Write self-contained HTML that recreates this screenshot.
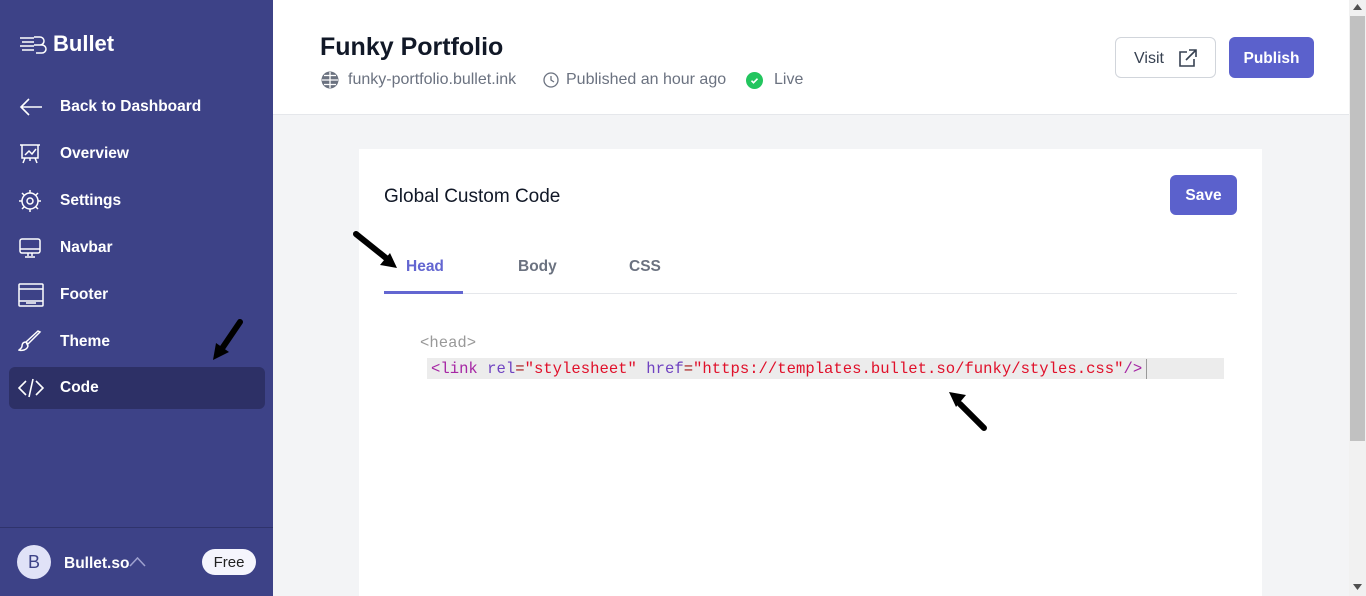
<!DOCTYPE html>
<html style="overflow:hidden;height:596px"><head><meta charset="utf-8"><style>
*{margin:0;padding:0;box-sizing:border-box}
body{width:1366px;height:596px;overflow:hidden;font-family:"Liberation Sans",sans-serif;background:#f3f4f6;position:relative}
.sb{position:absolute;left:0;top:0;width:273px;height:596px;background:#3d4287;color:#fff}
.logo{position:absolute;left:18px;top:31px;font-size:22px;font-weight:bold;display:flex;align-items:center}
.item{position:absolute;left:9px;width:256px;height:42px;display:flex;align-items:center;font-size:15.5px;font-weight:bold;border-radius:6px}
.item svg{position:absolute;left:9px}
.item span{position:absolute;left:51px;top:12px}
.act{background:#2d3066}
.foot{position:absolute;left:0;top:527px;width:273px;border-top:1px solid #2f336c;height:69px}
.av{position:absolute;left:17px;top:545px;width:34px;height:34px;border-radius:50%;background:#e0e2f7;color:#3d4287;font-size:18px;display:flex;align-items:center;justify-content:center}
.free{position:absolute;left:202px;top:549px;width:54px;height:26px;border-radius:13px;background:#f5f5fd;color:#222;font-size:15px;display:flex;align-items:center;justify-content:center}
.hdr{position:absolute;left:273px;top:0;width:1076px;height:115px;background:#fff;border-bottom:1px solid #e5e7eb}
.title{position:absolute;left:320px;top:33px;font-size:25px;font-weight:bold;color:#111827}
.meta{position:absolute;top:71px;font-size:16px;color:#6b7280;display:flex;align-items:center;gap:8px}
.btn{position:absolute;border-radius:6px;display:flex;align-items:center;justify-content:center;font-size:15.5px;font-weight:bold;padding-top:2px}
.card{position:absolute;left:359px;top:149px;width:903px;height:447px;background:#fff}
.tab{position:absolute;top:258px;font-size:15.5px;font-weight:bold;color:#6b7280}
.code{position:absolute;font-family:"Liberation Mono",monospace;font-size:15.6px}
.scroll{position:absolute;left:1349px;top:0;width:17px;height:596px;background:#f1f1f1}
</style></head><body>
<div class="sb">
 <div class="logo"><svg width="34" height="20" viewBox="0 0 34 20" fill="none" stroke="#fff" stroke-width="1.5"><path d="M2 4h14M4 8h12M2 12h14M4 16h12M16 3h6a4 4 0 0 1 0 8h-6M18 11h6a4 4 0 0 1 0 8h-6"/></svg><span style="margin-left:1px">Bullet</span></div>
 <div class="item" style="top:86px"><svg width="26" height="22" viewBox="0 0 26 22" fill="none" stroke="#fff" stroke-width="1.6"><path d="M24 11H3M11 3l-8 8 8 8"/></svg><span>Back to Dashboard</span></div>
 <div class="item" style="top:133px"><svg width="24" height="24" viewBox="0 0 24 24" fill="none" stroke="#fff" stroke-width="1.5"><path d="M2 3h20M4 3v13h16V3M7 13l4-4 3 3 4-5M7 16l-2 5M17 16l2 5M12 16v3"/></svg><span>Overview</span></div>
 <div class="item" style="top:180px"><svg width="24" height="24" viewBox="0 0 24 24" fill="none" stroke="#fff" stroke-width="1.5"><circle cx="12" cy="12" r="8"/><circle cx="12" cy="12" r="3"/><path d="M12 1v3M12 20v3M1 12h3M20 12h3M4 4l2 2M18 18l2 2M4 20l2-2M18 6l2-2"/></svg><span>Settings</span></div>
 <div class="item" style="top:227px"><svg width="24" height="24" viewBox="0 0 24 24" fill="none" stroke="#fff" stroke-width="1.5"><rect x="2" y="3" width="20" height="14" rx="2"/><path d="M2 13h20M10 17v3M14 17v3M7 21h10"/></svg><span>Navbar</span></div>
 <div class="item" style="top:274px"><svg width="26" height="26" viewBox="0 0 26 26" fill="none" stroke="#fff" stroke-width="1.5"><rect x="1" y="2" width="24" height="22" rx="1"/><path d="M1 7h24M1 19h24M8 21h10"/></svg><span>Footer</span></div>
 <div class="item" style="top:321px"><svg width="24" height="24" viewBox="0 0 24 24" fill="none" stroke="#fff" stroke-width="1.5"><path d="M22 2L10 14l-2-2L20 1zM8 12c-3 0-4 2-4 4s-2 3-3 4c3 1 8 0 9-4z"/></svg><span>Theme</span></div>
 <div class="item act" style="top:367px"><svg width="26" height="22" viewBox="0 0 26 22" fill="none" stroke="#fff" stroke-width="1.6"><path d="M8 4L1 11l7 7M18 4l7 7-7 7M15 2l-4 18"/></svg><span>Code</span></div>
 <div class="foot"></div>
 <div class="av">B</div>
 <div style="position:absolute;left:64px;top:555px;font-size:15.5px;font-weight:bold">Bullet.so</div>
 <svg style="position:absolute;left:129px;top:556px" width="17" height="11" viewBox="0 0 17 11" fill="none" stroke="#9ea1cf" stroke-width="1.5"><path d="M1 10l7.5-8 7.5 8"/></svg>
 <div class="free">Free</div>
 <svg style="position:absolute;left:205px;top:318px" width="40" height="45" viewBox="0 0 40 45"><path d="M35 4L16 32" stroke="#000" stroke-width="6" stroke-linecap="round"/><path d="M8 42l3-17 13 9z" fill="#000"/></svg>
</div>
<div class="hdr"></div>
<div class="title">Funky Portfolio</div>
<div class="meta" style="left:321px"><svg width="18" height="18" viewBox="0 0 18 18"><circle cx="9" cy="9" r="8.5" fill="#6b7280"/><path d="M1 9h16M9 1v16M3 4.5h12M3 13.5h12" stroke="#fff" stroke-width="1.3"/></svg><span style="margin-left:1px">funky-portfolio.bullet.ink</span></div>
<div class="meta" style="left:543px"><svg width="16" height="16" viewBox="0 0 16 16" fill="none" stroke="#6b7280" stroke-width="1.3"><circle cx="8" cy="8" r="7"/><path d="M8 4v4l3 2"/></svg><span style="margin-left:-1px">Published an hour ago</span></div>
<div class="meta" style="left:746px"><svg width="17" height="17" viewBox="0 0 17 17"><circle cx="8.5" cy="8.5" r="8.5" fill="#22c55e"/><path d="M5.5 8.7l2 2 4-4" stroke="#fff" stroke-width="1.6" fill="none"/></svg><span style="margin-left:3px">Live</span></div>
<div class="btn" style="left:1115px;top:37px;width:101px;height:41px;border:1px solid #d1d5db;color:#374151;background:#fff;font-weight:normal;gap:14px;font-size:16px">Visit<svg width="19" height="19" viewBox="0 0 19 19" fill="none" stroke="#374151" stroke-width="1.6"><path d="M9 3H2v14h14v-7M11 1h7v7M18 1L8 11"/></svg></div>
<div class="btn" style="left:1229px;top:37px;width:85px;height:41px;background:#5b61cc;color:#fff">Publish</div>
<div class="card"></div>
<div style="position:absolute;left:384px;top:186px;font-size:19px;color:#111827">Global Custom Code</div>
<div class="btn" style="left:1170px;top:175px;width:67px;height:40px;background:#5b61cc;color:#fff">Save</div>
<div class="tab" style="left:406px;color:#6366d1">Head</div>
<div class="tab" style="left:518px">Body</div>
<div class="tab" style="left:629px">CSS</div>
<div style="position:absolute;left:384px;top:293px;width:853px;height:1px;background:#e5e7eb"></div>
<div style="position:absolute;left:384px;top:291px;width:79px;height:3px;background:#6366d1"></div>
<svg style="position:absolute;left:350px;top:228px" width="52" height="45" viewBox="0 0 52 45"><path d="M6 6l30 24" stroke="#000" stroke-width="6" stroke-linecap="round"/><path d="M47 40l-17 -3 10-12z" fill="#000"/></svg>
<div class="code" style="left:420px;top:334px;color:#999">&lt;head&gt;</div>
<div style="position:absolute;left:427px;top:358px;width:797px;height:21px;background:#ececec"></div>
<div class="code" style="left:431px;top:360px;color:#a31515;white-space:pre"><span style="color:#a626a4">&lt;link</span> <span style="color:#6f42c1">rel</span>=<span style="color:#e0102a">"stylesheet"</span> <span style="color:#6f42c1">href</span>=<span style="color:#e0102a">"https://templates.bullet.so/funky/styles.css"</span><span style="color:#a626a4">/&gt;</span></div>
<div style="position:absolute;left:1146px;top:359px;width:1px;height:20px;background:#999"></div>
<svg style="position:absolute;left:944px;top:388px" width="48" height="48" viewBox="0 0 48 48"><path d="M40 40L16 16" stroke="#000" stroke-width="6" stroke-linecap="round"/><path d="M5 4l17 3-10 12z" fill="#000"/></svg>
<div class="scroll"><div style="position:absolute;left:1px;top:16px;width:15px;height:425px;background:#c1c1c1"></div>
<svg style="position:absolute;left:4px;top:4px" width="9" height="6"><path d="M0 6L4.5 0 9 6z" fill="#505050"/></svg>
<svg style="position:absolute;left:4px;top:584px" width="9" height="6"><path d="M0 0L4.5 6 9 0z" fill="#505050"/></svg></div>
</body></html>
